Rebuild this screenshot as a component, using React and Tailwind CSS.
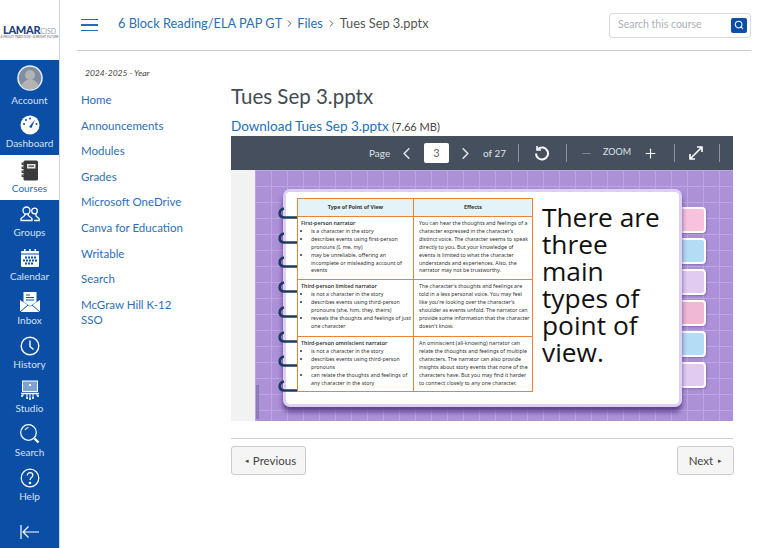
import { ChevronLeft, ChevronRight, Minus, Plus, Search } from "lucide-react";

const lato = "font-['Lato','Liberation_Sans',sans-serif]";

function AccountIcon() {
  return (
    <svg width="26" height="26" viewBox="0 0 26 26">
      <circle cx="13" cy="13" r="12" fill="#7f8ea3" stroke="#e8eef6" strokeWidth="1.5" />
      <circle cx="13" cy="10" r="5" fill="#b3b3b3" />
      <path d="M4.5 21c1.5-5 5-6.5 8.5-6.5s7 1.500 8.500 6.500a12 12 0 0 1-17 0z" fill="#b3b3b3" />
    </svg>
  );
}

function DashboardIcon() {
  return (
    <svg width="20" height="20" viewBox="0 0 20 20">
      <circle cx="10" cy="10" r="9.500" fill="#fff" />
      <path d="M9 12 15 4.500 11.500 13z" fill="#0a4ea6" />
      <g fill="#0a4ea6">
        <circle cx="4" cy="9" r="1" />
        <circle cx="6" cy="5" r="1" />
        <circle cx="10" cy="3.500" r="1" />
        <circle cx="16.500" cy="9" r="1" />
      </g>
    </svg>
  );
}

function CoursesIcon() {
  return (
    <svg width="18" height="21" viewBox="0 0 18 21">
      <rect x="2.500" y="0.500" width="14.500" height="20" rx="1.500" fill="#3a3a3a" />
      <rect x="6" y="4" width="8.500" height="4.500" fill="#e6e6e6" />
      <rect x="7.500" y="5.500" width="5.500" height="1.200" fill="#3a3a3a" />
      <g stroke="#3a3a3a" strokeWidth="1.200" fill="none">
        <path d="M4 3H1.200v1.500H4" />
        <path d="M4 7H1.200v1.500H4" />
        <path d="M4 11H1.200v1.500H4" />
        <path d="M4 15H1.200v1.500H4" />
      </g>
    </svg>
  );
}

function GroupsIcon() {
  return (
    <svg width="20" height="16" viewBox="0 0 20 16" fill="none" stroke="#fff" strokeWidth="1.300">
      <circle cx="6.500" cy="4.500" r="3.500" />
      <path d="M4.800 8v1.500L1 12.500v2h11v-2L8.200 9.500V8" />
      <circle cx="14.500" cy="5" r="2.800" />
      <path d="M14 14.500h5.200v-1.800L16 10V8" />
    </svg>
  );
}

function CalendarIcon() {
  return (
    <svg width="20" height="18" viewBox="0 0 20 18">
      <rect x="1" y="2" width="18" height="16" rx="1" fill="#fff" />
      <rect x="4" y="0" width="1.500" height="4" fill="#fff" />
      <rect x="14.500" y="0" width="1.500" height="4" fill="#fff" />
      <rect x="9.200" y="0" width="1.500" height="4" fill="#fff" />
      <g fill="#0a4ea6">
        <rect x="1" y="4.500" width="18" height="1" />
        <rect x="5" y="7.500" width="2" height="2" />
        <rect x="8" y="7.500" width="2" height="2" />
        <rect x="11" y="7.500" width="2" height="2" />
        <rect x="14" y="7.500" width="2" height="2" />
        <rect x="3" y="10.500" width="2" height="2" />
        <rect x="6" y="10.500" width="2" height="2" />
        <rect x="9" y="10.500" width="2" height="2" />
        <rect x="12" y="10.500" width="2" height="2" />
        <rect x="15" y="10.500" width="2" height="2" />
        <rect x="5" y="13.500" width="2" height="2" />
        <rect x="8" y="13.500" width="2" height="2" />
        <rect x="11" y="13.500" width="2" height="2" />
      </g>
    </svg>
  );
}

function InboxIcon() {
  return (
    <svg width="20" height="20" viewBox="0 0 20 20">
      <path d="M3.500 0h13v10L10 14 3.500 10z" fill="#fff" />
      <path d="M0 8l10 6.500L20 8v12H0z" fill="#fff" />
      <path d="M0 20l8-7M20 20l-8-7" stroke="#0a4ea6" strokeWidth="1" />
      <path d="M6 3h4M6 5.500h8M6 8h8" stroke="#0a4ea6" strokeWidth="1" />
    </svg>
  );
}

function HistoryIcon() {
  return (
    <svg width="20" height="20" viewBox="0 0 20 20" fill="none" stroke="#fff" strokeWidth="1.400">
      <circle cx="10" cy="10" r="8.800" />
      <path d="M10 4.500V10.500l3.500 3" />
    </svg>
  );
}

function StudioIcon() {
  return (
    <svg width="20" height="20" viewBox="0 0 20 20">
      <rect x="2.500" y="1" width="15" height="10.500" fill="#7ea3d3" stroke="#fff" strokeWidth="1" />
      <rect x="9" y="4" width="2" height="2" fill="#fff" />
      <path d="M1 13.500h18" stroke="#fff" strokeWidth="1.500" />
      <path d="M3 14v2M7 14v4M10 14v5M13 14v4M17 14v2" stroke="#fff" strokeWidth="1" />
      <g fill="#fff">
        <circle cx="2" cy="16" r="1" />
        <circle cx="7" cy="18" r="1" />
        <circle cx="10" cy="19" r="1" />
        <circle cx="13" cy="18" r="1" />
        <circle cx="18" cy="16" r="1" />
      </g>
    </svg>
  );
}

function SearchNavIcon() {
  return (
    <svg width="20" height="20" viewBox="0 0 20 20" fill="none" stroke="#fff" strokeWidth="1.200">
      <circle cx="8.500" cy="8.500" r="7.800" />
      <path d="M5 6c.8-1.500 2-2.300 3.500-2.500" />
      <path d="M14.500 14.500l4 4" strokeWidth="2.400" />
    </svg>
  );
}

function HelpIcon() {
  return (
    <svg width="20" height="20" viewBox="0 0 20 20" fill="none" stroke="#fff" strokeWidth="1.200">
      <circle cx="10" cy="10" r="8.800" />
      <path d="M7.300 7.500c0-1.700 1.200-2.800 2.800-2.800s2.700 1 2.700 2.500c0 2.300-2.800 2.300-2.800 4.800" />
      <circle cx="10" cy="15" r=".7" fill="#fff" />
    </svg>
  );
}

const globalNav = [
  { label: "Account", icon: <AccountIcon />, h: "h-[51px]", pt: "pt-[6px]", gap: "mt-[4px]" },
  { label: "Dashboard", icon: <DashboardIcon />, h: "h-[44px]", pt: "pt-[2px]", gap: "mt-[0px]" },
  { label: "Courses", icon: <CoursesIcon />, h: "h-[45px]", pt: "pt-[3px]", gap: "mt-[0px]", active: true },
  { label: "Groups", icon: <GroupsIcon />, h: "h-[44px]", pt: "pt-[2px]", gap: "mt-[0px]" },
  { label: "Calendar", icon: <CalendarIcon />, h: "h-[44px]", pt: "pt-[2px]", gap: "mt-[0px]" },
  { label: "Inbox", icon: <InboxIcon />, h: "h-[44px]", pt: "pt-[2px]", gap: "mt-[0px]" },
  { label: "History", icon: <HistoryIcon />, h: "h-[44px]", pt: "pt-[2px]", gap: "mt-[0px]" },
  { label: "Studio", icon: <StudioIcon />, h: "h-[44px]", pt: "pt-[2px]", gap: "mt-[0px]" },
  { label: "Search", icon: <SearchNavIcon />, h: "h-[44px]", pt: "pt-[2px]", gap: "mt-[0px]" },
  { label: "Help", icon: <HelpIcon />, h: "h-[44px]", pt: "pt-[2px]", gap: "mt-[0px]" },
];

const courseNav = ["Home", "Announcements", "Modules", "Grades", "Microsoft OneDrive", "Canva for Education", "Writable", "Search"];

function GlobalNav() {
  return (
    <nav className="w-[60px] h-[548px] shrink-0 flex flex-col bg-[#0a4ea6] border-r border-[#c9d6e6]">
      <div className="h-[60px] bg-white flex flex-col items-center justify-center pt-[2px]">
        <div className="flex items-baseline leading-none">
          <span className="text-[11px] font-black text-[#1f3f7f] tracking-[-0.3px]">LAMAR</span>
          <span className="text-[7px] text-[#9aa3ad]">CISD</span>
        </div>
        <div className="text-[3px] text-[#666] leading-[4px] whitespace-nowrap">A PROUD TRADITION · A BRIGHT FUTURE</div>
      </div>
      {globalNav.map((item) => (
        <div
          key={item.label}
          className={`${item.h} ${item.pt} flex flex-col items-center ${item.active ? "bg-white text-[#1c6fb8]" : "text-[#d5e1f0]"}`}
        >
          <div className="h-[24px] flex items-center justify-center">{item.icon}</div>
          <div className={`text-[10px] leading-[13px] ${item.gap}`}>{item.label}</div>
        </div>
      ))}
      <div className="flex-1 flex items-start justify-center pt-[17px]">
        <svg width="20" height="14" viewBox="0 0 20 14" fill="none" stroke="#fff" strokeWidth="1.200">
          <path d="M1 0v14M19 7H3M8.500 1.500 3 7l5.500 5.500" />
        </svg>
      </div>
    </nav>
  );
}

const tableRows = [
  {
    title: "First-person narrator",
    items: ["is a character in the story", "describes events using first-person pronouns (I, me, my)", "may be unreliable, offering an incomplete or misleading account of events"],
    effect: "You can hear the thoughts and feelings of a character expressed in the character's distinct voice. The character seems to speak directly to you. But your knowledge of events is limited to what the character understands and experiences. Also, the narrator may not be trustworthy.",
    h: "h-[63px]",
  },
  {
    title: "Third-person limited narrator",
    items: ["is not a character in the story", "describes events using third-person pronouns (she, him, they, theirs)", "reveals the thoughts and feelings of just one character"],
    effect: "The character's thoughts and feelings are told in a less personal voice. You may feel like you're looking over the character's shoulder as events unfold. The narrator can provide some information that the character doesn't know.",
    h: "h-[57px]",
  },
  {
    title: "Third-person omniscient narrator",
    items: ["is not a character in the story", "describes events using third-person pronouns", "can relate the thoughts and feelings of any character in the story"],
    effect: "An omniscient (all-knowing) narrator can relate the thoughts and feelings of multiple characters. The narrator can also provide insights about story events that none of the characters have. But you may find it harder to connect closely to any one character.",
    h: "h-[55px]",
  },
];

const tabs = ["bg-[#f7c3dc]", "bg-[#b4dcf5]", "bg-[#e1cbf1]", "bg-[#f0b8d2]", "bg-[#b4dcf5]", "bg-[#e1cbf1]"];
const rings = [0, 1, 2, 3, 4, 5, 6, 7];

function Slide() {
  return (
    <div className="relative ml-[24px] flex-1 h-[251px] bg-[#ac91d8] bg-[linear-gradient(#bba6e1_1px,transparent_1px),linear-gradient(90deg,#bba6e1_1px,transparent_1px)] bg-[size:16px_16px] pl-[28px] pt-[19px] flex items-start">
      <div className="absolute left-[1px] bottom-[2px] w-[3px] h-[34px] bg-[#7d6aa6] opacity-60" />
      <div className="relative w-[399px] h-[218px] bg-white rounded-[7px] border-[3px] border-[#e0cff4] shadow-[0_5px_5px_rgba(50,25,100,0.65)] pl-[11px] pt-[6px] flex z-10">
        {rings.map((n) => (
          <svg
            key={n}
            width="21"
            height="13"
            viewBox="0 0 21 13"
            className="absolute left-[-9px]"
            style={{ top: 15 + n * 24.700 }}
          >
            <path d="M7 1.500C2 2.500 .5 9.500 7 10.500h13" fill="none" stroke="#1d3a5f" strokeWidth="2.600" />
          </svg>
        ))}
        <table className="w-[236px] h-[193px] shrink-0 border-collapse table-fixed font-['Noto_Sans','Open_Sans',sans-serif] text-[5.300px] leading-[7.900px] text-[#333] self-start">
          <tbody>
            <tr className="h-[18px] bg-[#e3f3f7] font-bold text-center">
              <td className="w-[116px] border border-[#e8833a]">Type of Point of View</td>
              <td className="border border-[#e8833a]">Effects</td>
            </tr>
            {tableRows.map((row) => (
              <tr key={row.title} className={row.h}>
                <td className="border border-[#e8833a] align-top pl-[3px] pr-[2px] pt-[3px]">
                  <div className="font-semibold">{row.title}</div>
                  <ul className="list-disc pl-[10px]">
                    {row.items.map((it) => (
                      <li key={it}>{it}</li>
                    ))}
                  </ul>
                </td>
                <td className="border border-[#e8833a] align-top pl-[5px] pr-[2px] pt-[3px]">{row.effect}</td>
              </tr>
            ))}
          </tbody>
        </table>
        <div className="ml-[9px] mt-[6px] font-['Open_Sans','Noto_Sans',sans-serif] text-[26.300px] leading-[27px] text-[#111] w-[130px]">
          There are three main types of point of view.
        </div>
      </div>
      <div className="flex flex-col gap-[5px] mt-[18px] -ml-[3px]">
        {tabs.map((c, i) => (
          <div key={i} className={`${c} w-[27px] h-[26px] rounded-r-[4px] border-2 border-white shadow-[1px_1px_2px_rgba(60,30,110,0.3)]`} />
        ))}
      </div>
    </div>
  );
}

function Sep() {
  return <div className="w-px h-[18px] bg-[#8b93a0]" />;
}

function Toolbar() {
  return (
    <div className="h-[34px] bg-[#464f5d] flex items-center text-[#dfe3e8] text-[10px] pl-[138px]">
      <span className="w-[21px]">Page</span>
      <ChevronLeft size={19} strokeWidth={2} className="ml-[7px]" />
      <div className="ml-[8px] w-[25px] h-[20px] bg-white rounded-[2px] flex items-center justify-center text-[#666] text-[11px]">3</div>
      <ChevronRight size={19} strokeWidth={2} className="ml-[7px]" />
      <span className="ml-[8px] w-[35px]">of 27</span>
      <Sep />
      <svg width="16" height="16" viewBox="0 0 16 16" className="ml-[15px]" fill="none" stroke="#fff" strokeWidth="2">
        <path d="M4 4a6 6 0 1 1-2 4.500" />
        <path d="M3 1v4h4" strokeWidth="1.600" />
      </svg>
      <div className="ml-[16px]"><Sep /></div>
      <Minus size={13} strokeWidth={1.500} className="ml-[13px] text-[#8b93a0]" />
      <span className="ml-[10px] w-[28px] text-[9px] -mt-[2px]">ZOOM</span>
      <Plus size={15} strokeWidth={1.800} className="ml-[12px] text-white" />
      <div className="ml-[16px]"><Sep /></div>
      <svg width="14" height="14" viewBox="0 0 14 14" className="ml-[14px]" fill="none" stroke="#fff" strokeWidth="1.600">
        <path d="M1.500 12.500 12.500 1.500M8 1h5v5M1 8v5h5" />
      </svg>
      <div className="ml-[16px]"><Sep /></div>
    </div>
  );
}

export default function App() {
  return (
    <div className={`${lato} w-[768px] h-[548px] overflow-hidden flex bg-white`}>
      <GlobalNav />
      <div className="flex-1 flex flex-col pl-[17px]">
        <header className="w-[674px] h-[51px] shrink-0 border-b border-[#c7cdd1] flex items-center">
          <div className="ml-[4px] w-[17px] flex flex-col gap-[4px]">
            <div className="h-[1.500px] bg-[#1c6fb8]" />
            <div className="h-[1.500px] bg-[#1c6fb8]" />
            <div className="h-[1.500px] bg-[#1c6fb8]" />
          </div>
          <div className="ml-[20px] flex items-center text-[12.800px] text-[#2a6fb0] -mt-[3px]">
            <span>6 Block Reading/ELA PAP GT</span>
            <ChevronRight size={11} className="mx-[2px] text-[#555]" />
            <span>Files</span>
            <ChevronRight size={11} className="mx-[3px] text-[#555]" />
            <span className="text-[#555]">Tues Sep 3.pptx</span>
          </div>
          <div className="ml-auto w-[142px] h-[25px] border border-[#d5dadd] rounded-[3px] flex items-center justify-between pl-[8px] pr-[3px] text-[10.500px] text-[#aab0b5]">
            <span>Search this course</span>
            <div className="w-[16px] h-[15px] bg-[#0a4ea6] rounded-[2px] flex items-center justify-center">
              <Search size={10} strokeWidth={2.500} className="text-white" />
            </div>
          </div>
        </header>
        <div className="flex">
          <aside className="w-[154px] shrink-0 pl-[4px] text-[11.500px] leading-[15px] text-[#2d6fb5]">
            <div className="pl-[4px] pt-[17px] mb-[13px] text-[8.500px] leading-[11px] italic text-[#444]">2024-2025 - Year</div>
            {courseNav.map((name) => (
              <div key={name} className="mb-[10.600px]">{name}</div>
            ))}
            <div className="w-[110px]">McGraw Hill K-12 SSO</div>
          </aside>
          <main className="w-[502px] shrink-0">
            <h1 className="mt-[32px] text-[20.500px] leading-[26px] text-[#444b52]">Tues Sep 3.pptx</h1>
            <div className="mt-[8px] text-[13.500px] leading-[18px] text-[#1c6fb8]">
              Download Tues Sep 3.pptx <span className="text-[11px] text-[#444]">(7.66 MB)</span>
            </div>
            <div>
              <Toolbar />
              <div className="flex bg-[#f2f2f2]"><Slide /></div>
            </div>
            <div className="mt-[17px] border-t border-[#c7cdd1] pt-[7px] flex justify-between">
              <button className="w-[75px] h-[29px] bg-[#f5f5f5] border border-[#c7cdd1] rounded-[3px] text-[11.500px] text-[#444] flex items-center justify-center gap-[4px] pl-[4px]">
                <span className="text-[7px]">◂</span>Previous
              </button>
              <button className="w-[57px] h-[29px] -mr-[1px] bg-[#f5f5f5] border border-[#c7cdd1] rounded-[3px] text-[11.500px] text-[#444] flex items-center justify-center gap-[5px]">
                Next<span className="text-[7px]">▸</span>
              </button>
            </div>
          </main>
        </div>
      </div>
    </div>
  );
}
